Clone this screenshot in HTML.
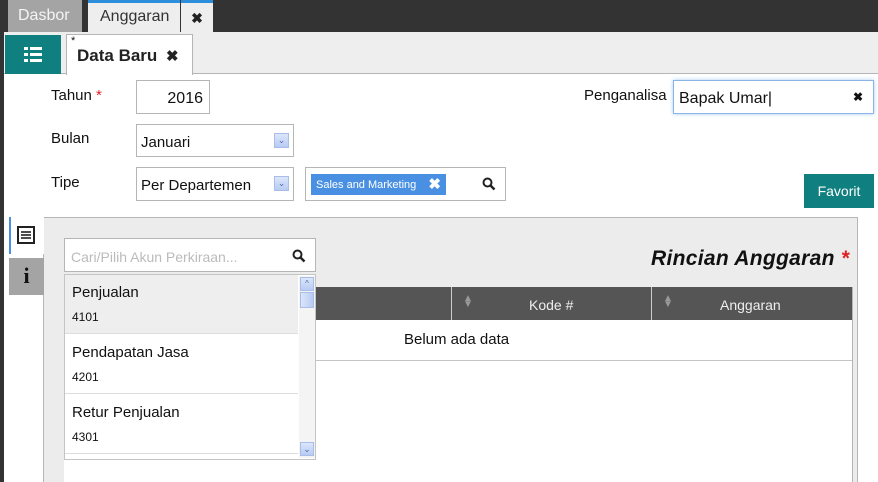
<!DOCTYPE html>
<html><head><style>
*{box-sizing:border-box;margin:0;padding:0}
body{width:878px;height:482px;overflow:hidden;background:#fff;font-family:"Liberation Sans",sans-serif;font-size:15px;color:#111;position:relative}
.a{position:absolute}
.inp{position:absolute;border:1px solid #b5b5b5;background:#fff}
.dd{position:absolute;width:15px;height:15px;background:linear-gradient(#dbe6fb,#b7cbf3);border:1px solid #a9bde8;right:4px;top:8px;color:#4a6aa8;font-size:9px;text-align:center;line-height:13px}
</style></head><body>
<div class="a" style="left:0;top:0;width:878px;height:32px;background:#333"></div>
<div class="a" style="left:8px;top:0;width:74px;height:32px;background:#a4a4a4;color:#f4f4f4;font-size:16px;padding:7px 0 0 10px">Dasbor</div>
<div class="a" style="left:88px;top:0;width:92px;height:32px;background:#eee;border-top:3px solid #2d8fdc;font-size:16px;padding:5px 0 0 12px;color:#333">Anggaran</div>
<div class="a" style="left:181px;top:0;width:32px;height:32px;background:#eee;border-top:3px solid #2d8fdc;font-size:14px;font-weight:bold;text-align:center;padding-top:7px;color:#222">✖</div>
<div class="a" style="left:0;top:32px;width:4px;height:450px;background:#333"></div>
<div class="a" style="left:4px;top:32px;width:874px;height:42px;background:#eee;border-bottom:1px solid #b5b5b5"></div>
<div class="a" style="left:5px;top:35px;width:56px;height:39px;background:#0f7f7f">
<svg width="56" height="39"><g fill="#fff"><rect x="19" y="12" width="4" height="3"/><rect x="25" y="12" width="12" height="3"/><rect x="19" y="18" width="4" height="3"/><rect x="25" y="18" width="12" height="3"/><rect x="19" y="24" width="4" height="3"/><rect x="25" y="24" width="12" height="3"/></g></svg></div>
<div class="a" style="left:66px;top:34px;width:127px;height:41px;background:#fff;border:1px solid #b5b5b5;border-bottom:none"></div>
<div class="a" style="left:71px;top:35px;font-size:11px">*</div>
<div class="a" style="left:77px;top:46px;font-size:17px;font-weight:bold;color:#222">Data Baru <span style="margin-left:4px;font-size:15px">✖</span></div>

<div class="a" style="left:51px;top:87px">Tahun <span style="color:#d22">*</span></div>
<div class="inp" style="left:136px;top:80px;width:74px;height:34px;text-align:right;padding:9px 6px 0 0;font-size:16px">2016</div>
<div class="a" style="left:51px;top:130px">Bulan</div>
<div class="inp" style="left:136px;top:124px;width:158px;height:33px;padding:9px 0 0 4px">Januari<div class="dd">&#8964;</div></div>
<div class="a" style="left:51px;top:174px">Tipe</div>
<div class="inp" style="left:136px;top:167px;width:158px;height:34px;padding:9px 0 0 4px">Per Departemen<div class="dd">&#8964;</div></div>
<div class="inp" style="left:305px;top:167px;width:201px;height:34px"></div>
<div class="a" style="left:311px;top:174px;width:135px;height:21px;background:#4a90e2;color:#fff;font-size:11px;padding:5px 0 0 5px">Sales and Marketing <b style="font-size:15px;position:absolute;right:5px;top:1px">✖</b></div>
<svg class="a" style="left:482px;top:177px" width="14" height="14"><circle cx="5.5" cy="5.5" r="4" fill="none" stroke="#222" stroke-width="2"/><line x1="8.5" y1="8.5" x2="12.5" y2="12.5" stroke="#222" stroke-width="2.5"/></svg>
<div class="a" style="left:584px;top:87px">Penganalisa</div>
<div class="inp" style="left:673px;top:80px;width:201px;height:34px;border-color:#8ab4e6;box-shadow:0 0 4px #aacdf2;padding:9px 0 0 5px;font-size:16px">Bapak Umar<span style="font-weight:100">|</span><b style="position:absolute;right:10px;top:9px;font-size:12px">✖</b></div>
<div class="a" style="left:804px;top:174px;width:70px;height:34px;background:#0f7f7f;color:#fff;text-align:center;padding-top:9px;font-size:14px">Favorit</div>

<div class="a" style="left:43px;top:217px;width:815px;height:265px;background:#ececec;border-top:1px solid #b5b5b5;border-left:1px solid #b5b5b5;border-right:1px solid #b5b5b5"></div>
<div class="a" style="left:9px;top:217px;width:35px;height:37px;background:#fff;border-left:2px solid #4a90e2"></div>
<svg class="a" style="left:17px;top:226px" width="19" height="19"><rect x="1" y="1" width="16" height="16" fill="none" stroke="#222" stroke-width="2"/><g stroke="#222" stroke-width="1.6"><line x1="4" y1="6" x2="14" y2="6"/><line x1="4" y1="9" x2="14" y2="9"/><line x1="4" y1="12" x2="14" y2="12"/></g></svg>
<div class="a" style="left:9px;top:258px;width:35px;height:37px;background:#a4a4a4;color:#111;font-family:'Liberation Serif',serif;font-weight:bold;font-size:22px;text-align:center;padding-top:5px">i</div>
<div class="a" style="left:651px;top:247px;font-size:21px;font-weight:bold;font-style:italic;letter-spacing:0.3px">Rincian Anggaran <span style="color:#d22">*</span></div>
<div class="a" style="left:64px;top:287px;width:789px;height:195px;background:#fff;border-right:1px solid #b5b5b5"></div>
<div class="a" style="left:64px;top:287px;width:788px;height:33px;background:#555;color:#eee;font-size:14px"></div>
<div class="a" style="left:451px;top:287px;width:1px;height:33px;background:#ccc"></div>
<div class="a" style="left:651px;top:287px;width:1px;height:33px;background:#ccc"></div>
<div class="a" style="left:463px;top:296px;color:#999;font-size:10px;line-height:6px">▲<br>▼</div>
<div class="a" style="left:663px;top:296px;color:#999;font-size:10px;line-height:6px">▲<br>▼</div>
<div class="a" style="left:529px;top:297px;color:#eee;font-size:14px">Kode #</div>
<div class="a" style="left:720px;top:297px;color:#eee;font-size:14px">Anggaran</div>
<div class="a" style="left:404px;top:331px">Belum ada data</div>
<div class="a" style="left:64px;top:360px;width:788px;height:1px;background:#c4c4c4"></div>

<div class="inp" style="left:64px;top:238px;width:252px;height:34px;padding:10px 0 0 6px;color:#bbb;font-size:14px">Cari/Pilih Akun Perkiraan...</div>
<svg class="a" style="left:292px;top:249px" width="14" height="14"><circle cx="5.5" cy="5.5" r="4" fill="none" stroke="#222" stroke-width="2"/><line x1="8.5" y1="8.5" x2="12.5" y2="12.5" stroke="#222" stroke-width="2.5"/></svg>
<div class="a" style="left:64px;top:274px;width:252px;height:186px;background:#fff;border:1px solid #c4c4c4"></div>
<div class="a" style="left:65px;top:275px;width:233px;height:59px;background:#eee;border-bottom:1px solid #ddd;padding:9px 0 0 7px">Penjualan<div style="font-size:12px;margin-top:9px">4101</div></div>
<div class="a" style="left:65px;top:335px;width:233px;height:59px;border-bottom:1px solid #ddd;padding:9px 0 0 7px">Pendapatan Jasa<div style="font-size:12px;margin-top:9px">4201</div></div>
<div class="a" style="left:65px;top:395px;width:233px;height:59px;border-bottom:1px solid #ddd;padding:9px 0 0 7px">Retur Penjualan<div style="font-size:12px;margin-top:9px">4301</div></div>
<div class="a" style="left:299px;top:276px;width:16px;height:182px;background:#f4f4f4"></div>
<div class="a" style="left:300px;top:277px;width:14px;height:14px;background:linear-gradient(#dbe6fb,#b7cbf3);border:1px solid #a9bde8;font-size:8px;color:#4a6aa8;text-align:center;line-height:12px">^</div>
<div class="a" style="left:300px;top:292px;width:14px;height:16px;background:linear-gradient(90deg,#dbe6fb,#b7cbf3);border:1px solid #a9bde8"></div>
<div class="a" style="left:300px;top:442px;width:14px;height:14px;background:linear-gradient(#dbe6fb,#b7cbf3);border:1px solid #a9bde8;font-size:9px;color:#4a6aa8;text-align:center;line-height:12px">&#8964;</div>
</body></html>
